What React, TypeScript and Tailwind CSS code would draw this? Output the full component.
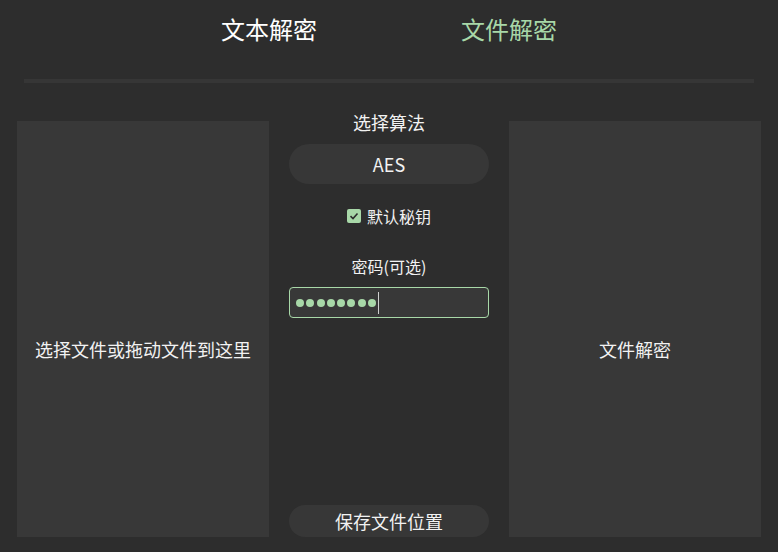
import React, { useState } from "react";

const App = () => {
  const [tab, setTab] = useState<"text" | "file">("file");
  const [useDefaultKey, setUseDefaultKey] = useState(true);
  const password = "12345678";

  return (
    <div
      className="w-[778px] h-[552px] bg-[#2d2d2d] text-[#f2f2f2] flex flex-col overflow-hidden"
      style={{ fontFamily: '"Noto Sans CJK SC", "Noto Sans", sans-serif' }}
    >
      {/* Tabs */}
      <div className="flex justify-center pt-[11px] h-[79px]">
        <button
          type="button"
          onClick={() => setTab("text")}
          className={`w-[240px] h-[36px] text-[24px] leading-[36px] text-center ${
            tab === "text" ? "text-[#a8d8a8]" : "text-white"
          }`}
        >
          文本解密
        </button>
        <button
          type="button"
          onClick={() => setTab("file")}
          className={`w-[240px] h-[36px] text-[24px] leading-[36px] text-center ${
            tab === "file" ? "text-[#a8d8a8]" : "text-white"
          }`}
        >
          文件解密
        </button>
      </div>
      <div className="mx-[24px] h-[4px] bg-[#363636]" />

      {/* Body */}
      <div className="flex gap-[20px] px-[17px] pt-[38px] pb-[15px] flex-1">
        <div className="w-[252px] bg-[#383838] flex items-center justify-center pt-[40px] text-[18px] cursor-pointer">
          选择文件或拖动文件到这里
        </div>

        <div className="w-[200px] flex flex-col items-center">
          <p className="text-[18px] leading-[26px] -mt-[12px]">选择算法</p>
          <div className="mt-[9px] w-full h-[40px] rounded-full bg-[#373737] flex items-center justify-center text-[18px]">
            AES
          </div>
          <label className="mt-[21px] flex items-center gap-[6px] text-[16px] leading-[22px] cursor-pointer">
            <span
              onClick={() => setUseDefaultKey(!useDefaultKey)}
              className={`w-[14px] h-[14px] rounded-[2px] flex items-center justify-center ${
                useDefaultKey ? "bg-[#a8d8a8]" : "border border-[#888]"
              }`}
            >
              {useDefaultKey && (
                <svg width="10" height="10" viewBox="0 0 10 10">
                  <path d="M1.5 5.2 L4 7.5 L8.5 2.5" fill="none" stroke="#2d2d2d" strokeWidth="1.6" />
                </svg>
              )}
            </span>
            默认秘钥
          </label>
          <p className="mt-[28px] text-[16px] leading-[22px]">密码(可选)</p>
          <div className="mt-[10px] w-full h-[31px] rounded-[4px] border border-[#a8d8a8] bg-[#383838] flex items-center pl-[6px] gap-[2.3px]">
            {password.split("").map((_, i) => (
              <span key={i} className="w-[8px] h-[8px] rounded-full bg-[#a8d8a8]" />
            ))}
            <span className="w-[1px] h-[22px] bg-[#cfcfcf]" />
          </div>
          <div className="flex-1" />
          <button
            type="button"
            className="w-full h-[32px] rounded-full bg-[#373737] text-[18px] leading-[32px]"
          >
            保存文件位置
          </button>
        </div>

        <div className="w-[252px] bg-[#383838] flex items-center justify-center pt-[40px] text-[18px] cursor-pointer">
          文件解密
        </div>
      </div>
    </div>
  );
};

export default App;
